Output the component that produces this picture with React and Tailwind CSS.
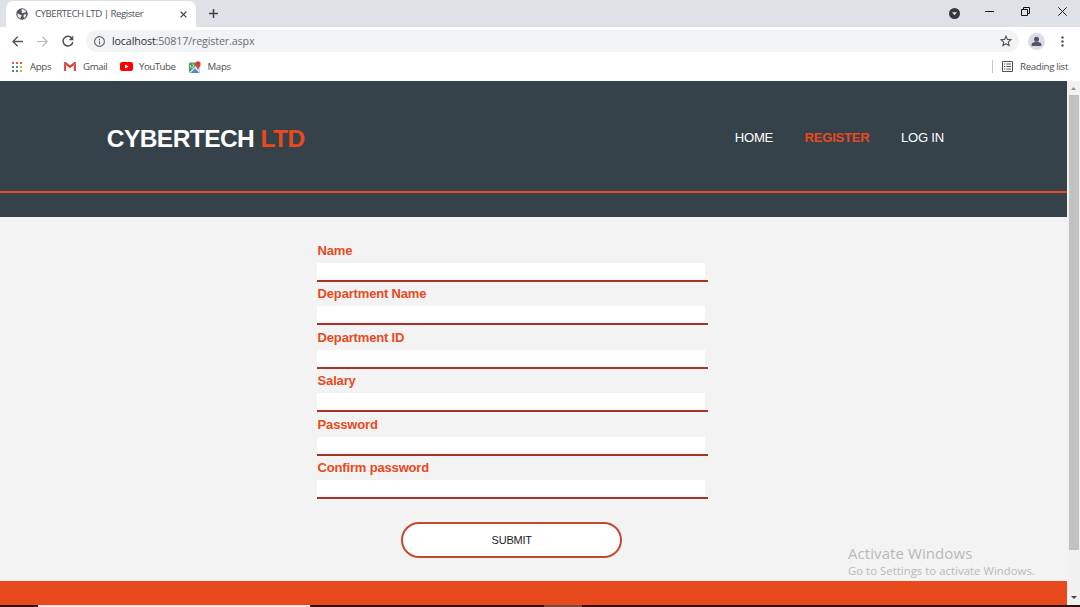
import React from 'react';

function Globe() {
  return (
    <svg className="h-3 w-3 shrink-0" viewBox="0 0 24 24">
      <circle cx="12" cy="12" r="11.5" fill="#505458" />
      <path d="M3 11c3 0 4 3 8 3 1 2-2 3-2 7-4-1-7-5-6-10zM11 3c4-1 8 1 9.500 5-2 0-3 2-5 2-2-1-2 1-4 0-2-1 2-3 0-4-1-1-1-2-.5-3zM16 13c2-1 3 0 4.500 0 0 3-2 6-4 7-2-2-2-5-.5-7z" fill="#f1f1f2" />
    </svg>
  );
}

function TabStrip() {
  return (
    <div className="flex h-[27px] shrink-0 items-stretch bg-[#dee1e6]">
      <div className="ml-[6px] mt-[1px] flex h-[26px] w-[190px] items-center rounded-t-[7px] bg-white pl-[10px]">
        <Globe />
        <span className="ml-[7px] w-[142px] whitespace-nowrap text-[9.700px] tracking-[-0.490px] text-[#505458]">CYBERTECH LTD | Register</span>
        <svg className="ml-[3px] h-[7px] w-[7px]" viewBox="0 0 8 8" stroke="#3c4043" strokeWidth="1.500"><path d="M.7.7l6.600 6.600M7.300.7L.7 7.300" /></svg>
      </div>
      <svg className="ml-[13px] mt-[9px] h-[9px] w-[9px]" viewBox="0 0 9 9" stroke="#3c4043" strokeWidth="1.500"><path d="M4.500 0v9M0 4.500h9" /></svg>
      <svg className="ml-auto mt-[8px] h-[11px] w-[11px]" viewBox="0 0 11 11"><circle cx="5.500" cy="5.500" r="5.500" fill="#35383c" /><path d="M3 4.300h5L5.500 7.300z" fill="#dee1e6" /></svg>
      <svg className="ml-[25px] mt-[7px] h-[9px] w-[9px]" viewBox="0 0 9 9"><path d="M0 4.500h9" stroke="#111" /></svg>
      <svg className="ml-[27px] mt-[7px] h-[9px] w-[9px]" viewBox="0 0 9 9" fill="none" stroke="#111"><path d="M.5 2.500h6v6h-6zM2.500 2.500v-2h6v6h-2" /></svg>
      <svg className="ml-[28px] mr-[13px] mt-[7px] h-[9px] w-[9px]" viewBox="0 0 9 9" stroke="#222"><path d="M.3.3l8.400 8.400M8.700.3L.3 8.700" /></svg>
    </div>
  );
}

function Toolbar() {
  return (
    <div className="flex h-7 shrink-0 items-center bg-white pl-[12px]">
      <svg className="h-[11px] w-[11px]" viewBox="0 0 11 11" fill="none" stroke="#505458" strokeWidth="1.400"><path d="M11 5.500H1M5.700.7L.9 5.500l4.800 4.800" /></svg>
      <svg className="ml-[14px] h-[11px] w-[11px]" viewBox="0 0 11 11" fill="none" stroke="#b5b7ba" strokeWidth="1.200"><path d="M0 5.500h10M5.300.7l4.800 4.800-4.800 4.800" /></svg>
      <svg className="ml-[14px] h-3 w-3" viewBox="0 0 12 12"><path d="M9.800 3A4.900 4.900 0 1 0 10.800 7" fill="none" stroke="#505458" strokeWidth="1.500" /><path d="M11.300.5v4.700H6.600z" fill="#505458" /></svg>
      <div className="ml-[12px] flex h-[22px] w-[933px] items-center rounded-full bg-[#f1f3f4] pl-[8px]">
        <svg className="h-[11px] w-[11px]" viewBox="0 0 11 11" fill="none" stroke="#5f6368" strokeWidth="1.100"><circle cx="5.500" cy="5.500" r="4.900" /><path d="M5.500 4.800v3.400M5.500 2.700v1.200" /></svg>
        <span className="ml-[7px] whitespace-nowrap pt-[1px] text-[10.700px] tracking-[-0.13px] text-[#6a6e73]"><span className="text-[#2c2f33]">localhost</span>:50817/register.aspx</span>
        <svg className="ml-auto mr-[7px] h-3 w-3" viewBox="0 0 12 12" fill="none" stroke="#505458" strokeWidth="1.100"><path d="M6 1.100l1.400 3.300 3.600.3-2.700 2.400.8 3.500L6 8.700l-3.100 1.900.8-3.500L1 4.700l3.600-.3z" /></svg>
      </div>
      <svg className="ml-[9px] h-[17px] w-[17px]" viewBox="0 0 17 17"><circle cx="8.500" cy="8.500" r="8.500" fill="#dadde5" /><circle cx="8.500" cy="6.200" r="2.500" fill="#50566a" /><path d="M3.600 13v-1.400c0-2 3.200-2.800 4.900-2.800s4.900.8 4.900 2.800V13z" fill="#50566a" /></svg>
      <svg className="ml-[16px] h-[11px] w-[3px]" viewBox="0 0 3 11" fill="#505458"><circle cx="1.500" cy="1.500" r="1.200" /><circle cx="1.500" cy="5.500" r="1.200" /><circle cx="1.500" cy="9.500" r="1.200" /></svg>
    </div>
  );
}

function Bookmarks() {
  return (
    <div className="flex h-[26px] shrink-0 items-center bg-white pb-[3px] pl-[12px] text-[9.700px] text-[#4b4f54]">
      <svg className="h-[10px] w-[10px]" viewBox="0 0 10 10">
        <path d="M0 0h2v2H0zM4 0h2v2H4zM8 0h2v2H8z" fill="#d9594c" />
        <path d="M0 4h2v2H0z" fill="#3f9a5b" /><path d="M4 4h2v2H4z" fill="#4a80dc" /><path d="M8 4h2v2H8z" fill="#dda830" />
        <path d="M0 8h2v2H0zM4 8h2v2H4z" fill="#3f9a5b" /><path d="M8 8h2v2H8z" fill="#dda830" />
      </svg>
      <span className="ml-[8px] w-[22px] whitespace-nowrap pt-[2px] tracking-[-0.35px]">Apps</span>
      <svg className="ml-[12px] h-[9px] w-3" viewBox="0 0 12 9"><path d="M0 1.200V9h2.200V3.600z" fill="#d8504a" /><path d="M12 1.200V9H9.800V3.600z" fill="#d8504a" /><path d="M0 1.500C0 0 1.300-.3 2.300.5L6 3.400 9.700.5C10.700-.3 12 0 12 1.500L6 6.200z" fill="#dd3f35" /></svg>
      <span className="ml-[7px] w-[25px] whitespace-nowrap pt-[2px] tracking-[-0.4px]">Gmail</span>
      <svg className="ml-[12px] h-[9px] w-[13px]" viewBox="0 0 13 9"><rect width="13" height="9" rx="2.200" fill="#f00" /><path d="M5 2.500v4l3.600-2z" fill="#fff" /></svg>
      <span className="ml-[6px] w-[38px] whitespace-nowrap pt-[2px] tracking-[-0.5px]">YouTube</span>
      <svg className="ml-[12px] h-[12px] w-3" viewBox="0 0 12 12"><rect y="1.500" width="10.500" height="10.500" rx="1" fill="#4a9f63" /><path d="M.5 11L8 4l2.500 2v5L10 12H1.500z" fill="#dfe6ee" /><path d="M1.500 12L6 7.500 10.500 12z" fill="#4d86df" /><path d="M1.500 4.300a1.700 1.700 0 1 0 2-1" fill="none" stroke="#fff" strokeWidth=".8" /><path d="M9 9C8.500 6.500 6.300 5.500 6.300 2.900a2.700 2.700 0 0 1 5.400 0C11.700 5.500 9.500 6.500 9 9z" fill="#db4437" /><circle cx="9" cy="2.800" r=".8" fill="#852820" /></svg>
      <span className="ml-[6.500px] whitespace-nowrap pt-[2px] tracking-[-0.35px]">Maps</span>
      <span className="ml-auto h-[13px] w-px bg-[#c8cacd]" />
      <svg className="ml-[9px] h-[11px] w-[11px]" viewBox="0 0 11 11" fill="none" stroke="#505458"><path d="M.5.500h10v10H.5zM2 3h1.300M4.300 3H9M2 5.500h1.300M4.300 5.500H9M2 8h1.300M4.300 8H9" /></svg>
      <span className="ml-[7px] w-[60px] whitespace-nowrap pt-[2px] tracking-[-0.32px]">Reading list</span>
    </div>
  );
}

const FIELDS = ['Name', 'Department Name', 'Department ID', 'Salary', 'Password', 'Confirm password'];

function Field({ label }) {
  return (
    <label className="block h-[43.4px] w-[390.500px]">
      <span className="block h-[20.400px] pl-[0.600px] pt-[0.400px] text-[13px] font-bold leading-[15px] tracking-[-0.170px] text-[#e8491d]">{label}</span>
      <span className="block h-[19px] border-b-2 border-[#a93226]">
        <span className="block h-[15px] w-[387.500px] bg-white" />
        <span className="block h-[2px] bg-[#fafafa]" />
      </span>
    </label>
  );
}

function Page() {
  return (
    <div className="flex min-w-0 flex-1 flex-col bg-[#f3f3f3]">
      <header className="h-[136px] shrink-0 bg-[#35424a]">
        <div className="flex h-[112px] items-center justify-between border-b-2 border-[#e8491d] pl-[106.800px] pr-[123px] pt-[3px]">
          <h1 className="whitespace-nowrap pt-[3px] text-[24.500px] font-bold tracking-[-0.560px] text-white">CYBERTECH <span className="text-[#e8491d]">LTD</span></h1>
          <nav className="flex gap-[31.400px] whitespace-nowrap text-[13.100px] tracking-[-0.230px] text-white">
            <a>HOME</a>
            <a className="font-bold text-[#e8491d]">REGISTER</a>
            <a>LOG IN</a>
          </nav>
        </div>
      </header>
      <main className="relative flex flex-1 flex-col pl-[317px] pt-[25.600px]">
        <form>
          {FIELDS.map((f) => <Field key={f} label={f} />)}
          <button type="button" className="ml-[84.400px] mt-[19px] block h-[36px] w-[220.600px] rounded-full border-2 border-[#c4492f] bg-white text-[11px] tracking-[-0.200px] text-[#222]">SUBMIT</button>
        </form>
        <div className="absolute left-[848px] top-[327px] whitespace-nowrap font-['Open_Sans','Noto_Sans',sans-serif] text-[#b9b9b9]">
          <div className="text-[15px] leading-[19px] tracking-[0.080px]">Activate Windows</div>
          <div className="text-[11.300px] leading-[16px] tracking-[0.050px]">Go to Settings to activate Windows.</div>
        </div>
      </main>
      <footer className="h-6 shrink-0 bg-[#e8491d]" />
    </div>
  );
}

function Scrollbar() {
  return (
    <div className="flex w-[13px] shrink-0 flex-col items-center bg-[#f1f1f1]">
      <svg className="mt-[6px] h-[3px] w-[5px] shrink-0" viewBox="0 0 5 3"><path d="M0 3h5L2.500 0z" fill="#929292" /></svg>
      <span className="mt-[5px] h-[455px] w-[10px] bg-[#c1c1c1]" />
      <svg className="mb-[6px] mt-auto h-[3px] w-[6px] shrink-0" viewBox="0 0 6 3"><path d="M0 0h6L3 3z" fill="#444" /></svg>
    </div>
  );
}

export default function App() {
  return (
    <div className="flex h-[607px] w-[1080px] flex-col overflow-hidden font-['Liberation_Sans',Arial,sans-serif]">
      <div className="shrink-0 font-['Open_Sans','Noto_Sans',sans-serif]">
        <TabStrip />
        <Toolbar />
        <Bookmarks />
      </div>
      <div className="flex min-h-0 flex-1">
        <Page />
        <Scrollbar />
      </div>
      <div className="flex h-[2px] shrink-0 bg-[#32100f] pl-[38px]">
        <span className="w-[272px] bg-[#fbe6df]" />
        <span className="ml-[234px] w-[38px] bg-[#784940]" />
      </div>
    </div>
  );
}
